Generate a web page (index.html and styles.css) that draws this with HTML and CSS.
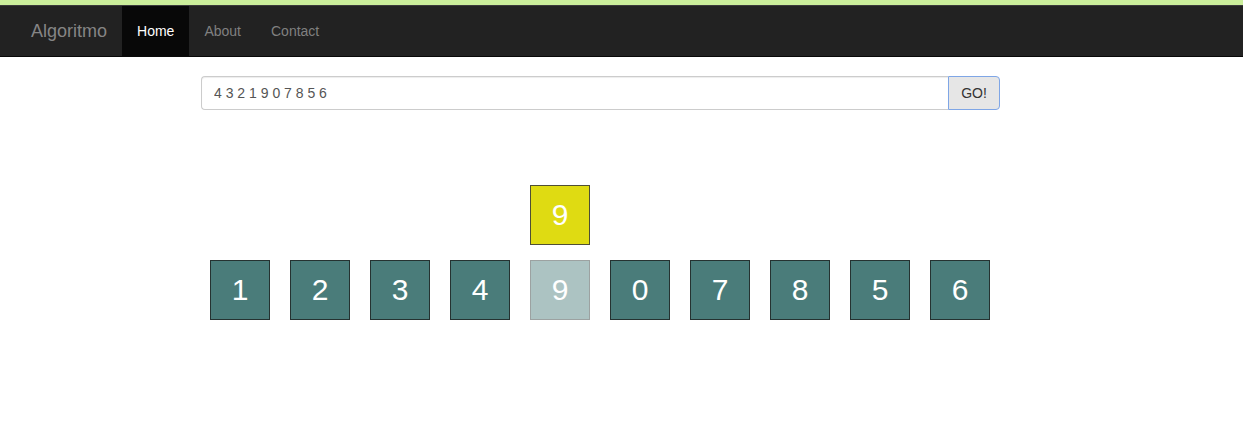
FILE: index.html
```html
<!DOCTYPE html>
<html>
<head>
<meta charset="utf-8">
<link rel="stylesheet" href="styles.css">
</head>
<body>
<div class="topstrip"></div>
<nav class="navbar">
  <a class="brand">Algoritmo</a>
  <ul class="nav">
    <li class="active"><a>Home</a></li>
    <li><a>About</a></li>
    <li><a>Contact</a></li>
  </ul>
</nav>
<main class="main">
  <div class="input-group">
    <input class="form-control" type="text" value="4 3 2 1 9 0 7 8 5 6">
    <button class="btn">GO!</button>
  </div>
  <div class="stage">
    <div class="lifted-row">
      <div class="box yellow">9</div>
    </div>
    <div class="row">
      <div class="box">1</div>
      <div class="box">2</div>
      <div class="box">3</div>
      <div class="box">4</div>
      <div class="box ghost">9</div>
      <div class="box">0</div>
      <div class="box">7</div>
      <div class="box">8</div>
      <div class="box">5</div>
      <div class="box">6</div>
    </div>
  </div>
</main>
</body>
</html>
```

FILE: styles.css
```css
* { box-sizing: border-box; }
body {
  margin: 0;
  font-family: "Liberation Sans", Arial, sans-serif;
  font-size: 14px;
  color: #333;
  background: #fff;
}
.topstrip {
  height: 5px;
  background: #cbee9b;
}
.navbar {
  height: 52px;
  background: #222;
  border-top: 1px solid #3a3a3a;
  border-bottom: 1px solid #080808;
  display: flex;
  align-items: stretch;
  padding-left: 16px;
}
.brand {
  color: #858585;
  font-size: 18px;
  line-height: 50px;
  padding: 0 15px;
}
.nav {
  list-style: none;
  margin: 0;
  padding: 0;
  display: flex;
}
.nav li a {
  display: block;
  color: #808080;
  line-height: 50px;
  padding: 0 15px;
}
.nav li.active a {
  color: #fff;
  background: #080808;
}
.main {
  width: 799px;
  margin-left: 201px;
  padding-top: 19px;
}
.input-group {
  display: flex;
  height: 34px;
}
.form-control {
  flex: 1;
  height: 34px;
  border: 1px solid #ccc;
  border-right: 0;
  border-radius: 4px 0 0 4px;
  padding: 6px 12px;
  font-family: "Liberation Sans", Arial, sans-serif;
  font-size: 14px;
  color: #555;
  outline: none;
  box-shadow: inset 0 1px 1px rgba(0,0,0,.075);
}
.btn {
  width: 52px;
  height: 34px;
  border: 1px solid #7fa6e6;
  border-radius: 0 4px 4px 0;
  background: #e6e6e6;
  color: #333;
  font-family: "Liberation Sans", Arial, sans-serif;
  font-size: 14px;
  padding: 0;
}
.stage {
  padding-top: 75px;
  padding-left: 9px;
}
.lifted-row {
  display: flex;
  padding-left: 320px;
  height: 75px;
}
.row {
  display: flex;
  gap: 20px;
}
.box {
  width: 60px;
  height: 60px;
  background: #4a7c7a;
  border: 1px solid #253231;
  color: #fff;
  font-size: 30px;
  display: flex;
  align-items: center;
  justify-content: center;
}
.box.yellow {
  background: #dfdb12;
  border-color: #4f4f35;
}
.box.ghost {
  opacity: 0.45;
}
```
